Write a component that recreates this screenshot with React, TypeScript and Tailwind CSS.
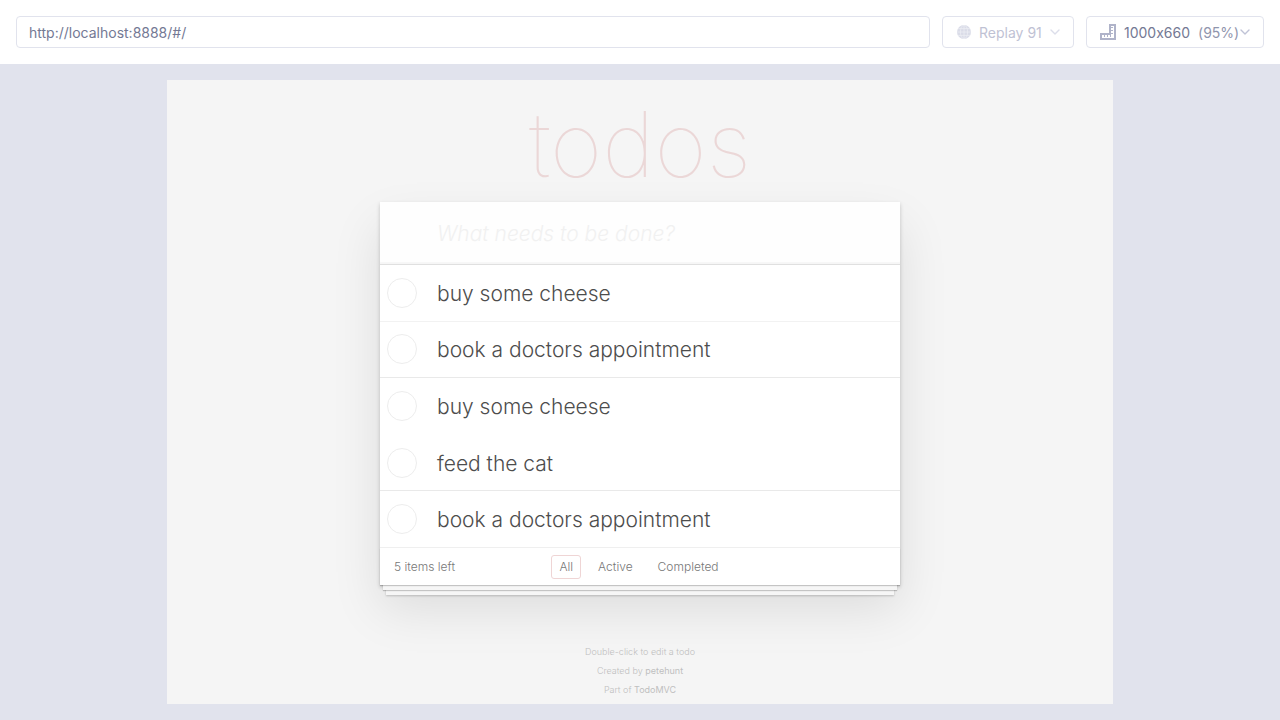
import { useState } from "react";

function Chevron({ color }: { color: string }) {
  return (
    <svg viewBox="0 0 10 6" className="h-[6px] w-[10px] shrink-0" fill="none" aria-hidden="true">
      <path d="M1 1 L5 5 L9 1" stroke={color} strokeWidth="1.4" strokeLinecap="round" strokeLinejoin="round" />
    </svg>
  );
}

function GlobeIcon() {
  return (
    <svg viewBox="0 0 14 14" className="h-[14px] w-[14px] shrink-0" fill="none" aria-hidden="true">
      <circle cx="7" cy="7" r="7" fill="#dadce8" />
      <g stroke="#eeeff5" strokeWidth="0.7">
        <ellipse cx="7" cy="7" rx="3.6" ry="6.8" />
        <path d="M7 0v14M0.2 7h13.6M1 3.6h12M1 10.4h12" />
      </g>
    </svg>
  );
}

function RulerIcon() {
  return (
    <svg viewBox="0 0 16 16" className="h-4 w-4 shrink-0" fill="none" aria-hidden="true">
      <path d="M10 1h5v14H1v-5h9z" stroke="#afb3c9" strokeWidth="2" />
      <path d="M4.5 11v2M7.5 11v2M10.5 11v2M11 3.5h2M11 6.5h2M11 9.5h2" stroke="#afb3c9" strokeWidth="1" />
    </svg>
  );
}

type Todo = { id: number; title: string; line: string };

const initialTodos: Todo[] = [
  { id: 1, title: "buy some cheese", line: "border-[#f2f2f2]" },
  { id: 2, title: "book a doctors appointment", line: "border-[#e9e9e9]" },
  { id: 3, title: "buy some cheese", line: "border-white" },
  { id: 4, title: "feed the cat", line: "border-[#e9e9e9]" },
  { id: 5, title: "book a doctors appointment", line: "border-[#efefef]" },
];

function TodoRow({ todo }: { todo: Todo }) {
  const id = `todo-${todo.id}`;
  return (
    <li className={`flex items-center border-b pl-[7px] ${todo.line}`}>
      <input
        id={id}
        type="checkbox"
        className="h-[30px] w-[30px] shrink-0 appearance-none rounded-full border border-[#ededed] bg-white checked:border-[#bddad5] checked:bg-[#eef7f5]"
      />
      <label htmlFor={id} className="pt-[2px] pl-5 text-[21px] leading-7 text-[#4d4d4d]">
        {todo.title}
      </label>
    </li>
  );
}

const filters = ["All", "Active", "Completed"];

function TodoApp() {
  const [filter, setFilter] = useState("All");
  return (
    <main className="mx-auto flex w-full max-w-[946px] grow flex-col items-center bg-[#f5f5f5] px-4 pb-[5px] font-['Inter','Liberation_Sans',sans-serif] font-light">
      <h1 className="pt-[9px] pb-px text-[90px] leading-[112px] font-thin text-[#ebd7d7]">todos</h1>
      <section className="w-full max-w-[520px] bg-white shadow-[0_2px_4px_0_rgba(0,0,0,0.2),0_24px_47px_0_rgba(0,0,0,0.1)]">
        <input
          aria-label="New todo"
          placeholder="What needs to be done?"
          className="block h-[62px] w-full bg-[#fefefe] pr-4 pl-[57px] text-[21px] font-light text-[#4d4d4d] shadow-[inset_0_-2px_1px_rgba(0,0,0,0.03)] outline-none placeholder:text-[#f1f1f1] placeholder:italic"
        />
        <ul className="grid min-h-[284px] auto-rows-fr border-t border-[#e0e0e0]">
          {initialTodos.map((todo) => (
            <TodoRow key={todo.id} todo={todo} />
          ))}
        </ul>
        <footer className="grid h-[37px] grid-cols-[1fr_auto_1fr] items-center px-[14px] text-xs leading-4 text-[#777777] shadow-[0_1px_1px_rgba(0,0,0,0.2),0_8px_0_-3px_#f6f6f6,0_9px_1px_-3px_rgba(0,0,0,0.2),0_16px_0_-6px_#f6f6f6,0_17px_2px_-6px_rgba(0,0,0,0.2)]">
          <span>5 items left</span>
          <nav className="flex gap-[9px] pr-[2px]">
            {filters.map((name) => (
              <a
                key={name}
                href="#/"
                onClick={() => setFilter(name)}
                className={`rounded-[3px] border px-[7px] py-[3px] ${name === filter ? "border-[#efd5d5]" : "border-transparent"}`}
              >
                {name}
              </a>
            ))}
          </nav>
        </footer>
      </section>
      <div className="mt-auto text-center text-[9px] leading-[19px] text-[#bfbfbf]">
        <p>Double-click to edit a todo</p>
        <p>
          Created by <a href="#petehunt" className="font-normal">petehunt</a>
        </p>
        <p>
          Part of <a href="#todomvc" className="font-normal">TodoMVC</a>
        </p>
      </div>
    </main>
  );
}

export default function App() {
  return (
    <div className="flex min-h-screen flex-col bg-[#e1e3ed] font-['Inter',sans-serif]">
      <header className="flex h-16 items-center gap-3 bg-white px-4 text-sm text-[#747994] [font-feature-settings:'calt'_0]">
        <input
          aria-label="Address"
          defaultValue="http://localhost:8888/#/"
          className="h-8 min-w-0 grow rounded-[4px] border border-[#e1e3ed] px-3 outline-none"
        />
        <button className="flex h-8 w-[132px] items-center rounded-[4px] border border-[#e1e3ed] pl-[14px] text-[#bfc2d4]">
          <GlobeIcon />
          <span className="pt-[2px] pr-2 pl-2">Replay 91</span>
          <Chevron color="#dcdeea" />
        </button>
        <button className="flex h-8 w-[178px] items-center rounded-[4px] border border-[#e1e3ed] pl-[13px]">
          <RulerIcon />
          <span className="pt-[2px] pl-2">1000x660</span>
          <span className="pt-[2px] pr-px pl-2 text-[#9095ad]">(95%)</span>
          <Chevron color="#c0c3d6" />
        </button>
      </header>
      <div className="flex grow flex-col p-4">
        <TodoApp />
      </div>
    </div>
  );
}
